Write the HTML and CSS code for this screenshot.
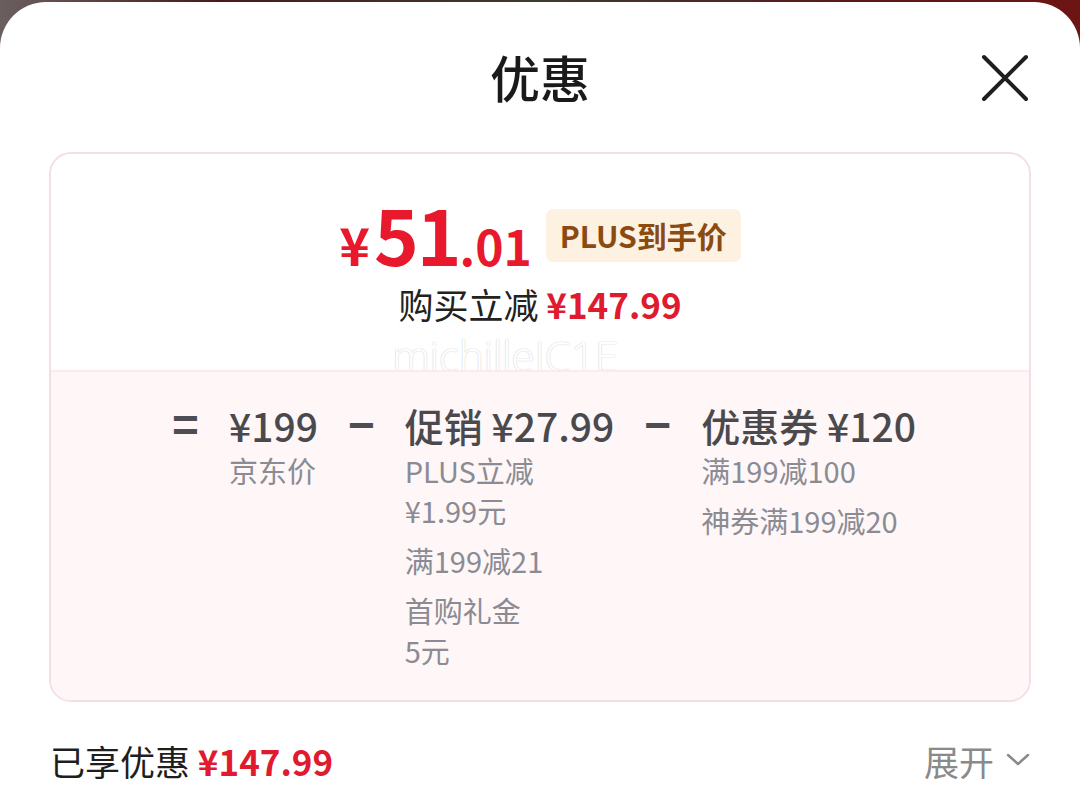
FILE: index.html
```html
<!DOCTYPE html>
<html lang="zh">
<head>
<meta charset="utf-8">
<link rel="stylesheet" href="styles.css">
</head>
<body>
<div class="sheet">
  <div class="header">
    <div class="title">优惠</div>
    <button class="close" aria-label="关闭">
      <svg width="48" height="48" viewBox="0 0 48 48"><path d="M3 3 L45 45 M45 3 L3 45" stroke="#1f1f1f" stroke-width="4" stroke-linecap="round" fill="none"/></svg>
    </button>
  </div>

  <div class="card">
    <div class="summary">
      <div class="price-row">
        <span class="price"><span class="yen">¥</span><span class="int">51</span><span class="dec">.01</span></span>
        <span class="badge">PLUS到手价</span>
      </div>
      <div class="save-row">购买立减 <span class="red-bold">¥147.99</span></div>
      <div class="watermark">michilleJC1E</div>
    </div>
    <div class="breakdown">
      <div class="op">=</div>
      <div class="col">
        <div class="head">¥199</div>
        <div class="subs"><div class="sub">京东价</div></div>
      </div>
      <div class="op">−</div>
      <div class="col">
        <div class="head">促销 ¥27.99</div>
        <div class="subs narrow">
          <div class="sub">PLUS立减<span class="nw">¥1.99元</span></div>
          <div class="sub">满199减21</div>
          <div class="sub">首购礼金<span class="nw">5元</span></div>
        </div>
      </div>
      <div class="op">−</div>
      <div class="col">
        <div class="head">优惠券 ¥120</div>
        <div class="subs">
          <div class="sub">满199减100</div>
          <div class="sub">神券满199减20</div>
        </div>
      </div>
    </div>
  </div>

  <div class="footer">
    <div class="enjoyed">已享优惠 <span class="red-bold">¥147.99</span></div>
    <div class="expand">展开
      <svg width="24" height="14" viewBox="0 0 24 14"><path d="M2 2 L12 11 L22 2" stroke="#8a8a8a" stroke-width="2.5" fill="none" stroke-linecap="round" stroke-linejoin="round"/></svg>
    </div>
  </div>
</div>
</body>
</html>
```

FILE: styles.css
```css
html, body {
  margin: 0;
  padding: 0;
  height: 100%;
}
body {
  background: linear-gradient(90deg, #6a5f5f 0%, #4a1a1a 20%, #3d3a32 50%, #5a1818 80%, #6e1414 100%);
  font-family: "Noto Sans CJK SC", "Noto Sans", sans-serif;
  overflow: hidden;
}
.sheet {
  margin-top: 2px;
  background: #ffffff;
  border-radius: 46px 46px 0 0;
  height: 808px;
  display: flex;
  flex-direction: column;
}
.header {
  height: 150px;
  display: flex;
  align-items: center;
  justify-content: center;
  position: relative;
}
.title {
  font-size: 50px;
  color: #1a1a1a;
  font-weight: 500;
  line-height: 1;
  margin-top: -2px;
}
.close {
  position: absolute;
  right: 51px;
  top: 52px;
  background: none;
  border: 0;
  padding: 0;
  width: 48px;
  height: 48px;
}
.card {
  margin: 0 49px;
  border: 2px solid #f6dfe4;
  border-radius: 22px;
  overflow: hidden;
  height: 550px;
  box-sizing: border-box;
  display: flex;
  flex-direction: column;
}
.summary {
  height: 216px;
  display: flex;
  flex-direction: column;
  align-items: center;
  padding-top: 52px;
  box-sizing: border-box;
}
.price-row {
  display: flex;
  align-items: center;
  gap: 14px;
  height: 60px;
}
.price {
  color: #e8192c;
  font-weight: 700;
  display: flex;
  align-items: baseline;
  margin-top: 4px;
}
.yen { font-size: 52px; margin-right: 4px; }
.int { font-size: 76px; letter-spacing: -2px; line-height: 1; }
.dec { font-size: 48px; }
.badge {
  background: #fdf1e1;
  color: #8a4a10;
  font-size: 30px;
  font-weight: 700;
  padding: 0 14px;
  height: 53px;
  line-height: 53px;
  border-radius: 7px;
  margin-top: -2px;
}
.save-row {
  margin-top: 18px;
  font-size: 35px;
  color: #222;
  line-height: 40px;
}
.red-bold {
  color: #e01a2f;
  font-weight: 700;
}
.watermark {
  margin-top: 12px;
  font-family: "Open Sans", sans-serif;
  font-weight: 300;
  font-size: 43px;
  line-height: 40px;
  color: #ffffff;
  text-shadow: 0 0 1px #cfcfcf, 0 0 2px #e0e0e0;
  letter-spacing: -0.5px;
  margin-left: -70px;
}
.breakdown {
  flex: 1;
  background: #fef6f7;
  border-top: 2px solid #fcebee;
  display: flex;
  justify-content: center;
  align-items: flex-start;
  gap: 30px;
  padding-top: 33px;
  padding-left: 8px;
}
.op {
  font-family: "Liberation Sans", sans-serif;
  font-size: 46px;
  line-height: 40px;
  color: #4e4e52;
  font-weight: 700;
}
.col {
  display: flex;
  flex-direction: column;
}
.head {
  font-size: 39px;
  line-height: 40px;
  color: #4a4a4e;
  font-weight: 500;
  white-space: nowrap;
}
.subs {
  margin-top: 5px;
  display: flex;
  flex-direction: column;
  gap: 10px;
}
.subs.narrow { width: 150px; }
.nw { white-space: nowrap; }
.sub {
  font-size: 29px;
  line-height: 40px;
  color: #8b8b93;
}
.footer {
  margin-top: 28px;
  height: 60px;
  display: flex;
  align-items: center;
  justify-content: space-between;
  padding: 0 50px;
}
.enjoyed {
  font-size: 35px;
  color: #1e1e1e;
}
.expand {
  font-size: 35px;
  color: #8a8a8a;
  display: flex;
  align-items: center;
  gap: 12px;
}
```
